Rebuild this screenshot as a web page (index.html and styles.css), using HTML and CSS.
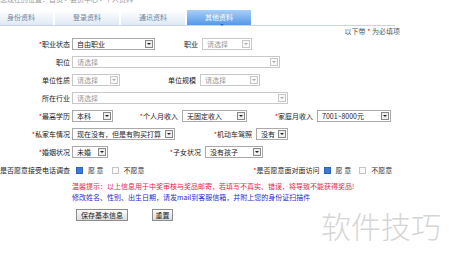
FILE: index.html
```html
<!DOCTYPE html>
<html lang="zh-CN">
<head>
    <meta charset="UTF-8">
    <title>个人资料 - 其他资料</title>
    <link rel="stylesheet" href="styles.css">
</head>
<body>

<!-- 位置导航 -->
<div class="crumb"><span>您现在的位置：首页 &gt; 会员中心 &gt; 个人资料</span></div>

<!-- 资料选项卡 -->
<div class="tabs">
    <a class="tab first">身份资料</a>
    <a class="tab">登录资料</a>
    <a class="tab">通讯资料</a>
    <a class="tab on">其他资料</a>
</div>
<div class="tip">以下带 <em>*</em> 为必填项</div>

<div class="form">
    <div class="row">
        <label class="lbl"><em>*</em>职业状态</label>
        <span class="sel w83"><span>自由职业</span><i></i></span>
        <label class="lbl2 w47">职业</label>
        <span class="sel empty w50"><span>请选择</span><i></i></span>
    </div>
    <div class="row">
        <label class="lbl">职位</label>
        <span class="sel empty w208"><span>请选择</span><i></i></span>
    </div>
    <div class="row">
        <label class="lbl">单位性质</label>
        <span class="sel empty w48"><span>请选择</span><i></i></span>
        <label class="lbl2 w80">单位规模</label>
        <span class="sel empty w60"><span>请选择</span><i></i></span>
    </div>
    <div class="row">
        <label class="lbl">所在行业</label>
        <span class="sel empty w216"><span>请选择</span><i></i></span>
    </div>
    <div class="row">
        <label class="lbl"><em>*</em>最高学历</label>
        <span class="sel w41"><span>本科</span><i></i></span>
        <label class="lbl2 w69"><em>*</em>个人月收入</label>
        <span class="sel w65"><span>无固定收入</span><i></i></span>
        <label class="lbl2 w70"><em>*</em>家庭月收入</label>
        <span class="sel w74"><span>7001~8000元</span><i></i></span>
    </div>
    <div class="row">
        <label class="lbl"><em>*</em>私家车情况</label>
        <span class="sel w103"><span>现在没有，但是有购买打算</span><i></i></span>
        <label class="lbl2 w81"><em>*</em>机动车驾照</label>
        <span class="sel w32"><span>没有</span><i></i></span>
    </div>
    <div class="row">
        <label class="lbl"><em>*</em>婚姻状况</label>
        <span class="sel w36"><span>未婚</span><i></i></span>
        <label class="lbl2 w97"><em>*</em>子女状况</label>
        <span class="sel w58"><span>没有孩子</span><i></i></span>
    </div>
    <div class="row">
        <label class="lbl">是否愿意接受电话调查</label>
        <span class="chk on"></span><span class="opt">愿 意</span>
        <span class="chk"></span><span class="opt">不愿意</span>
        <label class="lbl2 w171"><em>*</em>是否愿意面对面访问</label>
        <span class="chk on"></span><span class="opt">愿 意</span>
        <span class="chk"></span><span class="opt">不愿意</span>
    </div>

    <p class="warn">温馨提示：以上信息用于中奖审核与奖品邮寄，若填写不真实、错误，将导致不能获得奖品!</p>
    <p class="info">修改姓名、性别、出生日期，请发mail到客服信箱，并附上您的身份证扫描件</p>

    <div class="btns">
        <button type="button">保存基本信息</button>
        <button type="reset" class="reset">重置</button>
    </div>
</div>

<div class="mark">软件技巧</div>

</body>
</html>
```

FILE: styles.css
```css
body {
    margin: 0;
    font-family: "Noto Sans CJK SC", "Liberation Sans", sans-serif;
    font-size: 7px;
    color: #222;
    background: #fff;
    width: 450px;
    height: 261px;
    overflow: hidden;
    position: relative;
}
em {
    font-style: normal;
    color: #f00;
}
.crumb {
    height: 4px;
    overflow: hidden;
    color: #999;
    line-height: 8px;
}
.crumb span {
    display: block;
    margin-top: -5px;
}
.tabs {
    display: flex;
    width: 406px;
    height: 15px;
    margin: 6px 0 0 -11px;
    border-bottom: 1px solid #c3d6ea;
}
.tab {
    width: 64px;
    margin-right: 2px;
    height: 15px;
    line-height: 15px;
    text-align: center;
    color: #73849a;
    background: linear-gradient(#ffffff, #dfe9f3);
}
.tab.on {
    position: relative;
    color: #fff;
    background: linear-gradient(#a8d0fa, #5598e6);
}
.tab.on::after {
    content: "";
    position: absolute;
    left: 33px;
    bottom: -1px;
    border-left: 2px solid transparent;
    border-right: 2px solid transparent;
    border-top: 2px solid #2c6cc0;
}
.tip {
    width: 400px;
    height: 8px;
    line-height: 8px;
    text-align: right;
    color: #555;
    margin-top: 1px;
}
.row {
    display: flex;
    align-items: center;
    height: 18px;
}
.lbl, .lbl2 {
    box-sizing: border-box;
    text-align: right;
    white-space: nowrap;
}
.lbl {
    width: 72px;
    padding-right: 2px;
}
.lbl2 {
    padding-right: 4px;
}
.sel {
    box-sizing: border-box;
    display: flex;
    align-items: center;
    justify-content: space-between;
    height: 12px;
    border: 1px solid #a9a9a9;
    background: #fff;
    padding-left: 4px;
    white-space: nowrap;
    overflow: hidden;
}
.sel i {
    box-sizing: border-box;
    display: flex;
    align-items: center;
    justify-content: center;
    flex: none;
    width: 8px;
    height: 8px;
    margin-right: 1px;
    border: 1px solid #888;
    background: #eee;
}
.sel i::after {
    content: "";
    border-left: 2px solid transparent;
    border-right: 2px solid transparent;
    border-top: 2px solid #222;
}
.sel.empty {
    border-color: #c8c8c8;
}
.sel.empty span {
    color: #9a9a9a;
}
.sel.empty i {
    border-color: #c8c8c8;
    background: #f8f8f8;
}
.sel.empty i::after {
    border-top-color: #aaa;
}
.w32 { width: 32px; }
.w36 { width: 36px; }
.w41 { width: 41px; }
.w47 { width: 47px; }
.w48 { width: 48px; }
.w50 { width: 50px; }
.w58 { width: 58px; }
.w60 { width: 60px; }
.w65 { width: 65px; }
.w69 { width: 69px; }
.w70 { width: 70px; }
.w74 { width: 74px; }
.w80 { width: 80px; }
.w81 { width: 81px; }
.w83 { width: 83px; }
.w97 { width: 97px; }
.w103 { width: 103px; }
.w171 { width: 171px; padding-right: 0; }
.w208 { width: 208px; }
.w216 { width: 216px; }
.chk {
    box-sizing: border-box;
    width: 7px;
    height: 7px;
    margin-left: 4px;
    border: 1px solid #c4c4c4;
    background: #fafafa;
}
.chk.on {
    border-color: #2f62b4;
    background: #3a7ad8;
}
.opt {
    margin: 0 4px 0 5px;
    color: #333;
}
.warn, .info {
    margin: 0 0 0 72px;
    height: 10px;
    line-height: 10px;
    white-space: nowrap;
}
.warn {
    margin-top: 2px;
    color: #e8264a;
}
.info {
    margin-top: 1px;
    color: #2b2bcc;
}
.btns {
    display: flex;
    margin: 7px 0 0 76px;
}
button {
    font-family: inherit;
    font-size: 7px;
    height: 12px;
    padding: 0;
    line-height: 10px;
    color: #222;
    border: 1px solid #8c8c8c;
    background: linear-gradient(#fbfbfb, #dcdcdc);
    width: 52px;
}
button.reset {
    width: 21px;
    margin-left: 24px;
}
.mark {
    position: absolute;
    left: 321px;
    top: 206px;
    font-size: 30px;
    font-weight: 300;
    line-height: 38px;
    color: #d6d6d6;
}
```
